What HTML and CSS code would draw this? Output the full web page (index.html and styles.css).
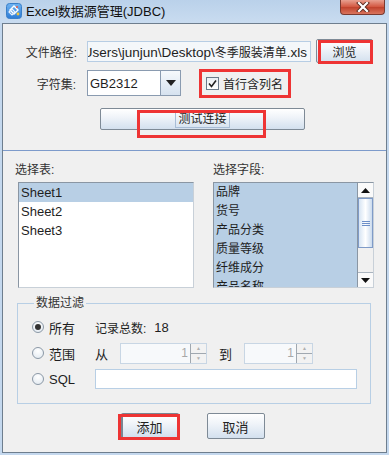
FILE: index.html
```html
<!DOCTYPE html>
<html lang="zh">
<head>
    <meta charset="UTF-8">
    <title>Excel数据源管理(JDBC)</title>
    <link rel="stylesheet" href="styles.css">
</head>
<body>
    <div class="window">
        <!-- Barra de titulo -->
        <div class="titlebar">
            <svg class="app-icon" width="16" height="16" viewBox="0 0 16 16">
                <defs>
                    <linearGradient id="ig" x1="0" y1="0" x2="0" y2="1">
                        <stop offset="0" stop-color="#6fb4f2"/>
                        <stop offset="1" stop-color="#2b7bd6"/>
                    </linearGradient>
                </defs>
                <rect x="0.5" y="0.5" width="15" height="15" rx="3" fill="url(#ig)" stroke="#3a7fc8"/>
                <path d="M8 3 L12 7 L8 11 L4 7 Z" fill="none" stroke="#fff" stroke-width="1.4"/>
                <path d="M6 6 L9 9 L6 12 L3 9 Z" fill="none" stroke="#e8f2ff" stroke-width="1.2"/>
                <circle cx="12" cy="11" r="1.4" fill="#f3c43a"/>
                <circle cx="11" cy="4" r="1" fill="#e95b4a"/>
            </svg>
            <span class="title">Excel数据源管理(JDBC)</span>
            <div class="close-btn">
                <svg width="14" height="10" viewBox="0 0 14 10">
                    <path d="M3 1 L11 9 M11 1 L3 9" stroke="#5a2a20" stroke-width="4" stroke-linecap="square"/>
                    <path d="M3 1 L11 9 M11 1 L3 9" stroke="#fff" stroke-width="2.2" stroke-linecap="square"/>
                </svg>
            </div>
        </div>

        <div class="client">
            <!-- Panel superior -->
            <div class="top-panel">
                <div class="row row-file">
                    <label class="lbl lbl-file">文件路径:</label>
                    <div class="path-field"><span>C:\Users\junjun\Desktop\<span class="cjk">冬季服装清单</span>.xls</span></div>
                    <div class="btn btn-browse">浏览<span class="mark mark-browse"></span></div>
                </div>
                <div class="row row-charset">
                    <label class="lbl lbl-charset">字符集:</label>
                    <div class="combo">
                        <span class="combo-value">GB2312</span>
                        <span class="combo-arrow">
                            <svg width="10" height="6" viewBox="0 0 10 6"><path d="M0 0 H10 L5 6 Z" fill="#222"/></svg>
                        </span>
                    </div>
                    <div class="check-wrap">
                        <span class="checkbox">
                            <svg width="9" height="9" viewBox="0 0 9 9"><path d="M1 4.5 L3.5 7.5 L8 1.5" fill="none" stroke="#222" stroke-width="1.6"/></svg>
                        </span>
                        <span>首行含列名</span>
                    </div>
                </div>
                <div class="row row-test">
                    <div class="btn btn-test"><span class="focus">测试连接</span><span class="mark mark-test"></span></div>
                </div>
            </div>

            <!-- Listas -->
            <div class="lists-labels">
                <span class="lbl-left">选择表:</span>
                <span class="lbl-right">选择字段:</span>
            </div>
            <div class="lists">
                <ul class="list list-tables">
                    <li class="sel">Sheet1</li>
                    <li>Sheet2</li>
                    <li>Sheet3</li>
                </ul>
                <div class="list list-fields">
                    <ul>
                        <li>品牌</li>
                        <li>货号</li>
                        <li>产品分类</li>
                        <li>质量等级</li>
                        <li>纤维成分</li>
                        <li>产品名称</li>
                    </ul>
                    <div class="scrollbar">
                        <div class="sb-btn"><svg width="9" height="5" viewBox="0 0 9 5"><path d="M0 5 H9 L4.5 0 Z" fill="#111"/></svg></div>
                        <div class="sb-thumb"><span></span><span></span><span></span></div>
                        <div class="sb-track"></div>
                        <div class="sb-btn"><svg width="9" height="5" viewBox="0 0 9 5"><path d="M0 0 H9 L4.5 5 Z" fill="#111"/></svg></div>
                    </div>
                </div>
            </div>

            <!-- Filtro -->
            <fieldset class="group">
                <legend>数据过滤</legend>
                <div class="frow">
                    <span class="radio on"></span><span class="rtext">所有</span>
                    <span class="count">记录总数:</span><span class="count-num">18</span>
                </div>
                <div class="frow">
                    <span class="radio"></span><span class="rtext">范围</span>
                    <span class="from">从</span>
                    <div class="spinner spin1"><span class="spin-val">1</span><span class="spin-btns"><i>▲</i><i>▼</i></span></div>
                    <span class="to">到</span>
                    <div class="spinner spin2"><span class="spin-val">1</span><span class="spin-btns"><i>▲</i><i>▼</i></span></div>
                </div>
                <div class="frow">
                    <span class="radio"></span><span class="rtext">SQL</span>
                    <div class="sql-field"></div>
                </div>
            </fieldset>

            <div class="buttons">
                <div class="btn btn-bottom btn-add">添加<span class="mark mark-add"></span></div>
                <div class="btn btn-bottom">取消</div>
            </div>
        </div>
    </div>
</body>
</html>
```

FILE: styles.css
```css
/* Estilos generales */
body {
    margin: 0;
    font-family: "Liberation Sans", "Noto Sans CJK SC", sans-serif;
    font-size: 12px;
    color: #1e1e1e;
}

.window {
    width: 389px;
    height: 455px;
    background: #c4d8ee;
    display: flex;
    flex-direction: column;
    overflow: hidden;
}

/* Barra de titulo */
.titlebar {
    height: 23px;
    display: flex;
    align-items: center;
    position: relative;
    background: linear-gradient(to bottom, #bad1ea, #c9dcf0);
}

.app-icon {
    margin-left: 6px;
    margin-top: -2px;
}

.title {
    margin-left: 4px;
    margin-top: -2px;
    font-size: 13px;
    color: #111;
}

.close-btn {
    position: absolute;
    left: 340px;
    top: 0;
    width: 45px;
    height: 15px;
    box-sizing: border-box;
    border: 1px solid #7a3a30;
    border-top: none;
    border-radius: 0 0 4px 4px;
    background: linear-gradient(to bottom, #e8a090, #d2553e 50%, #c0412b 51%, #d9755e);
    display: flex;
    align-items: center;
    justify-content: center;
}

/* Area de cliente */
.client {
    flex: 1;
    margin: 0 2px 2px 2px;
    border: 1px solid #6e7e8e;
    background: #f0f0f0;
    display: flex;
    flex-direction: column;
}

.top-panel {
    height: 126px;
    border-bottom: 1px solid #7d9bcb;
}

.row {
    display: flex;
    align-items: center;
}

.row-file {
    margin-top: 16px;
    height: 22px;
}

.lbl {
    text-align: right;
    color: #333;
    font-size: 12px;
}

.lbl-file {
    width: 74px;
}

.path-field {
    margin-left: 10px;
    width: 224px;
    height: 21px;
    box-sizing: border-box;
    border: 1px solid #b7cde4;
    background: #f4f7fa;
    display: flex;
    justify-content: flex-end;
    align-items: center;
    overflow: hidden;
    white-space: nowrap;
    padding-right: 3px;
    font-size: 13.5px;
}

.path-field .cjk {
    font-size: 12px;
}

.btn {
    position: relative;
    box-sizing: border-box;
    border: 1px solid #7e8a96;
    border-radius: 2px;
    background: linear-gradient(to bottom, #ffffff, #f0f4f9 40%, #d3e0ee);
    display: flex;
    align-items: center;
    justify-content: center;
    font-size: 12px;
    color: #222;
}

.btn-browse {
    margin-left: 5px;
    width: 57px;
    height: 24px;
}

.mark {
    position: absolute;
    border: 3px solid #ee3434;
    box-sizing: border-box;
}

.mark-browse {
    left: 1px;
    top: 0;
    width: 55px;
    height: 24px;
}

.row-charset {
    margin-top: 8px;
    height: 26px;
}

.lbl-charset {
    width: 73px;
}

.combo {
    margin-left: 11px;
    width: 94px;
    height: 26px;
    box-sizing: border-box;
    border: 1px solid #8a9bb0;
    background: #fff;
    display: flex;
}

.combo-value {
    flex: 1;
    display: flex;
    align-items: center;
    padding-left: 2px;
    font-size: 13px;
}

.combo-arrow {
    width: 19px;
    border-left: 1px solid #8a9bb0;
    background: linear-gradient(to bottom, #f6f9fc, #d6e2ef);
    display: flex;
    align-items: center;
    justify-content: center;
}

.check-wrap {
    margin-left: 18px;
    width: 92px;
    height: 29px;
    box-sizing: border-box;
    border: 3px solid #ee3434;
    display: flex;
    align-items: center;
    padding-left: 4px;
    gap: 4px;
    font-size: 12px;
}

.checkbox {
    width: 13px;
    height: 13px;
    box-sizing: border-box;
    border: 1px solid #6a7a8a;
    background: linear-gradient(to bottom, #e9eef3, #ffffff);
    display: flex;
    align-items: center;
    justify-content: center;
}

.row-test {
    margin-top: 12px;
}

.btn-test {
    margin-left: 97px;
    width: 205px;
    height: 22px;
}

.focus {
    border: 1px solid #a8bdd6;
    padding: 0 2px;
    line-height: 16px;
}

.mark-test {
    left: 36px;
    top: 1px;
    width: 129px;
    height: 28px;
}

/* Listas */
.lists-labels {
    position: relative;
    height: 15px;
    margin-top: 9px;
    display: flex;
    font-size: 12px;
    color: #333;
}

.lbl-left {
    margin-left: 12px;
    width: 198px;
}

.lists {
    display: flex;
    margin-top: 7px;
    height: 106px;
}

.list {
    margin: 0;
    padding: 0;
    list-style: none;
    box-sizing: border-box;
    border: 1px solid #8a96a3;
    border-right-color: #c8d0d8;
    border-bottom-color: #c8d0d8;
    background: #fff;
}

.list li {
    height: 19px;
    line-height: 19px;
    padding-left: 2px;
}

.list-tables {
    margin-left: 15px;
    width: 176px;
    font-size: 13px;
}

.list-tables .sel {
    background: #b8cfe5;
}

.list-fields {
    margin-left: 19px;
    width: 161px;
    display: flex;
    overflow: hidden;
    background: #b8cfe5;
}

.list-fields ul {
    margin: 0;
    padding: 0;
    list-style: none;
    flex: 1;
    font-size: 12px;
}

.scrollbar {
    width: 15px;
    display: flex;
    flex-direction: column;
    background: #f0f0f0;
    border-left: 1px solid #8a96a3;
}

.sb-btn {
    height: 15px;
    box-sizing: border-box;
    border-bottom: 1px solid #aab4bf;
    background: #fafafa;
    display: flex;
    align-items: center;
    justify-content: center;
}

.sb-btn:last-child {
    border-bottom: none;
    border-top: 1px solid #aab4bf;
}

.sb-thumb {
    height: 50px;
    box-sizing: border-box;
    border: 1px solid #7f9bc8;
    background: linear-gradient(to right, #d6e4f3, #ffffff 50%, #cbdbee);
    display: flex;
    flex-direction: column;
    align-items: center;
    justify-content: center;
    gap: 1px;
}

.sb-thumb span {
    width: 8px;
    height: 1px;
    background: #6d8fc8;
}

.sb-track {
    flex: 1;
}

/* Filtro de datos */
.group {
    margin: 8px 0 0 14px;
    width: 354px;
    height: 108px;
    box-sizing: border-box;
    padding: 6px 0 0 14px;
    border: 1px solid #b8cfe5;
    font-size: 12px;
}

.group legend {
    padding: 0 2px;
    margin-left: 2px;
    line-height: 14px;
    color: #333;
}

.frow {
    display: flex;
    align-items: center;
    height: 22px;
    margin-bottom: 4px;
}

.radio {
    width: 12px;
    height: 12px;
    box-sizing: border-box;
    border-radius: 50%;
    border: 1px solid #8b98a6;
    background: radial-gradient(circle at 50% 30%, #ffffff, #dfe7ef);
    display: flex;
    align-items: center;
    justify-content: center;
}

.radio.on::after {
    content: "";
    width: 6px;
    height: 6px;
    border-radius: 50%;
    background: #333;
}

.rtext {
    margin-left: 5px;
    width: 46px;
    font-size: 13px;
}

.count-num {
    margin-left: 8px;
    font-size: 13px;
}

.from {
    width: 25px;
    font-size: 13px;
}

.to {
    margin-left: 12px;
    width: 25px;
    font-size: 13px;
}

.spinner {
    height: 21px;
    display: flex;
    box-sizing: border-box;
    border: 1px solid #c8d6e4;
    background: #f7f9fb;
}

.spin1 {
    width: 87px;
}

.spin2 {
    width: 69px;
}

.spin-val {
    flex: 1;
    text-align: right;
    padding-right: 2px;
    line-height: 19px;
    color: #a8a8a8;
}

.spin-btns {
    width: 15px;
    display: flex;
    flex-direction: column;
    border-left: 1px solid #a0a8b0;
}

.spin-btns i {
    flex: 1;
    font-style: normal;
    font-size: 5px;
    color: #b0b0b0;
    display: flex;
    align-items: center;
    justify-content: center;
    background: #f2f2f2;
}

.spin-btns i + i {
    border-top: 1px solid #a0a8b0;
}

.sql-field {
    width: 262px;
    height: 20px;
    box-sizing: border-box;
    border: 1px solid #b8cfe5;
    background: #fff;
}

/* Botones inferiores */
.buttons {
    display: flex;
    justify-content: center;
    gap: 28px;
    margin-top: 9px;
    padding-right: 4px;
}

.btn-bottom {
    width: 58px;
    height: 26px;
    font-size: 13px;
}

.btn-add {
    border: 2px solid #7a8592;
}

.mark-add {
    left: -5px;
    top: -1px;
    width: 62px;
    height: 26px;
}
```
